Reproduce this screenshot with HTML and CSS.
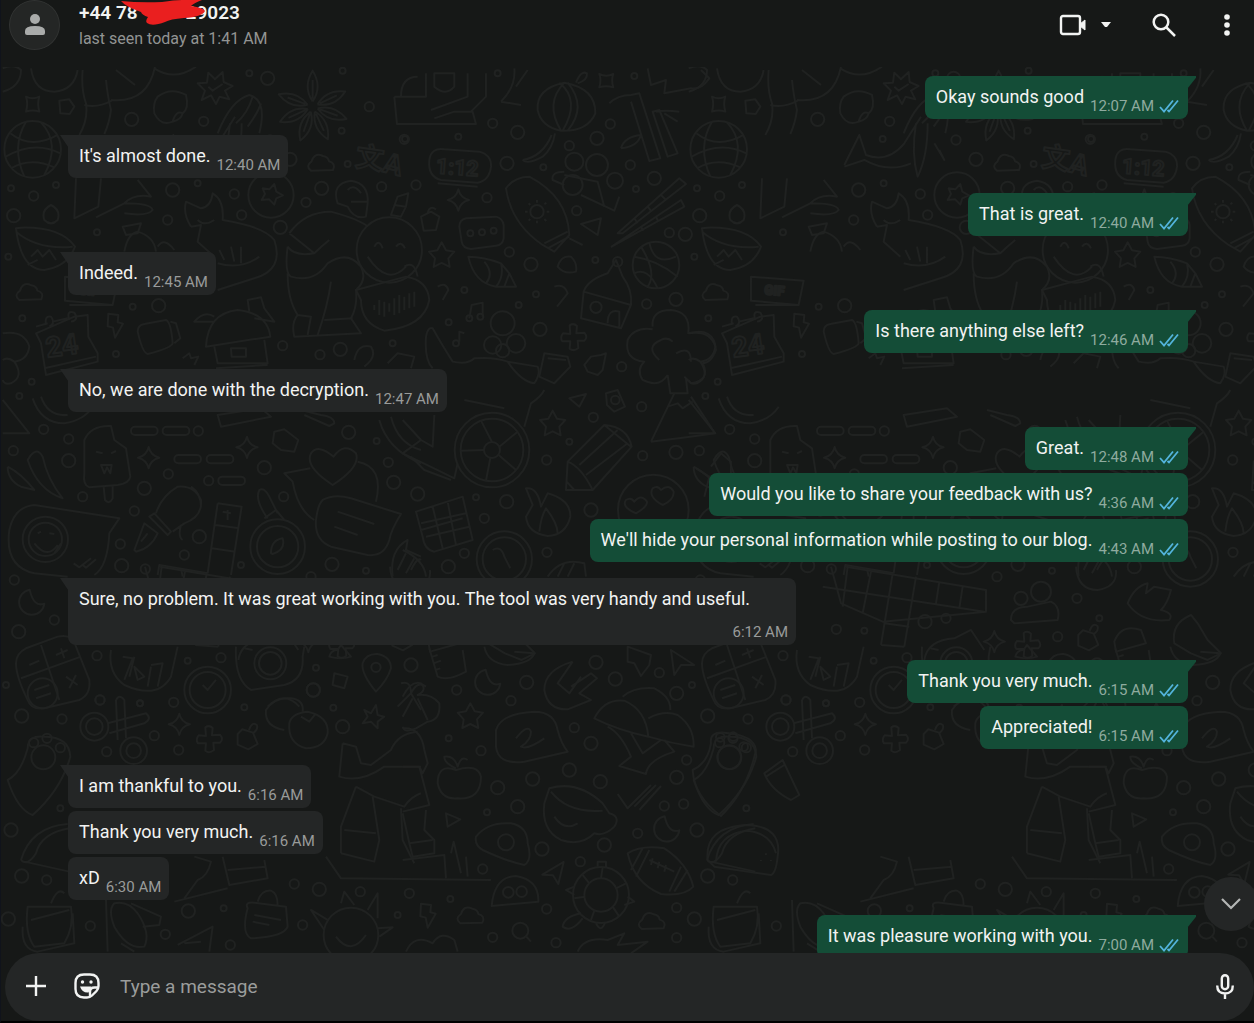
FILE: index.html
```html
<!DOCTYPE html>
<html lang="en">
<head>
  <meta charset="UTF-8">
  <meta name="viewport" content="width=device-width, initial-scale=1">
  <title>Chat</title>
  <link rel="stylesheet" href="styles.css">
</head>
<body>

  <!-- Shared shapes -->
  <svg class="sprite" aria-hidden="true">
    <defs>
      <symbol id="ticks" viewBox="0 0 20 14">
        <path d="M1 8 L5 12.5 L14 1.5 M8.5 11 L10 12.5 L19 1.5" fill="none" stroke="currentColor" stroke-width="1.8"/>
      </symbol>
      <circle id="r1" r="9"/>
      <circle id="r2" r="14"/>
      <circle id="r3" r="20"/>
      <path id="spark" d="M0 -32 Q6 -6 32 0 Q6 6 0 32 Q-6 6 -32 0 Q-6 -6 0 -32Z"/>
      <path id="star" d="M0 -38 L13 -14 L38 -10 L20 10 L24 36 L0 24 L-24 36 L-20 10 L-38 -10 L-13 -14Z"/>
      <path id="cloud" d="M-30 22 Q-48 8 -28 -6 Q-20 -34 6 -22 Q22 -20 24 -6 Q46 0 36 20Z"/>
      <path id="bolt" d="M-18 -34 L12 -30 L10 -8 L26 -4 L2 38 L-4 8 L-20 4Z"/>
      <path id="moon" d="M-6 -36 A38 38 0 1 0 38 6 Q6 18 -6 -36Z"/>
      <path id="plane" d="M30 -32 L-34 6 L-2 8 L14 34Z"/>
      <path id="petal" d="M0 -16 Q-30 -60 0 -108 Q30 -60 0 -16 M0 -24 V-80"/>
      <path id="cross" d="M-12 -36 Q0 -44 10 -34 L8 -12 L32 -14 Q44 0 32 10 L12 10 L14 32 Q0 44 -12 34 L-10 12 L-34 12 Q-42 0 -32 -12 L-10 -10Z"/>
      <path id="jar" d="M-28 -10 L-14 -24 L18 -14 L32 20 L4 36 L-28 22Z M6 -22 Q16 -50 30 -36 Q34 -24 18 -12"/>
    </defs>
  </svg>

  <header class="header">
    <div class="avatar">
      <svg width="20" height="22" viewBox="0 0 20 22" fill="#a9abaa" aria-hidden="true">
        <circle cx="10" cy="5" r="5"/>
        <path d="M0 19 V17 Q0 12 10 12 Q20 12 20 17 V19 Q20 21 18 21 H2 Q0 21 0 19Z"/>
      </svg>
    </div>
    <div class="contact">
      <h1 class="contact-name"><span>+44 78</span><span class="hidden-digits"><svg class="scribble" width="90" height="26" viewBox="0 0 90 26" aria-hidden="true"><path fill="#ea1f1f" d="M3 1 Q22 3 44 2 Q56 0 64 0 H84 Q76 3 73 6 Q86 8 87 11 Q84 17 66 18 Q52 19 47 22 Q34 27 29 23 Q27 21 30 17 Q24 15 23 12 Q8 7 3 1Z"/></svg></span><span>29023</span></h1>
      <p class="contact-status">last seen today at 1:41 AM</p>
    </div>
    <div class="header-actions">
      <button class="icon-btn video-btn" type="button" aria-label="Video call">
        <svg width="28" height="22" viewBox="0 0 28 22" fill="none" stroke="currentColor" stroke-width="2.4" aria-hidden="true">
          <rect x="2" y="2" width="19" height="18" rx="2"/>
          <path d="M21 10 L26 6 V16 L21 12Z" fill="currentColor" stroke-width="1"/>
        </svg>
        <svg width="10" height="6" viewBox="0 0 10 6" fill="currentColor" aria-hidden="true"><path d="M0 0 H10 L6 5 H4Z"/></svg>
      </button>
      <button class="icon-btn" type="button" aria-label="Search">
        <svg width="24" height="24" viewBox="0 0 24 24" fill="none" stroke="currentColor" stroke-width="2.5" aria-hidden="true">
          <circle cx="9" cy="9" r="7.3"/>
          <path d="M14 14 L23 23"/>
        </svg>
      </button>
      <button class="icon-btn" type="button" aria-label="Menu">
        <svg width="6" height="22" viewBox="0 0 6 22" fill="currentColor" aria-hidden="true">
          <circle cx="3" cy="3" r="2.8"/><circle cx="3" cy="11" r="2.8"/><circle cx="3" cy="19" r="2.8"/>
        </svg>
      </button>
    </div>
  </header>

  <main class="chat">
    <!-- Doodle wallpaper, repeats every 686px -->
    <svg class="wallpaper" aria-hidden="true">
      <g id="tile">
        <g transform="translate(0 -7) scale(.3333)">
          <circle cx="95" cy="268" r="85"/>
          <path d="M28 220 Q90 270 170 225 M75 185 Q30 260 70 350 M120 187 Q180 250 130 345 M14 290 Q100 240 178 280 M30 325 Q90 290 160 322"/>
          <path d="M245 30 Q240 90 255 130 Q262 180 235 225 M315 60 Q320 110 330 150 Q325 190 310 222 M250 135 Q290 145 332 122 M330 120 Q440 130 462 20 M345 30 L402 75 M460 25 Q520 65 585 20"/>
          <path d="M90 25 Q100 95 160 95 Q220 90 230 30 M5 95 Q60 80 60 30 Q40 10 5 25"/>
          <path d="M75 110 Q95 120 115 110 Q108 130 115 155 Q95 148 75 155 Q82 130 75 110Z M175 122 L205 118 L220 140 L206 162 L178 160Z"/>
          <path d="M590 70 L618 68 L622 38 L642 58 L665 36 L668 66 L695 78 L672 92 L685 118 L656 110 L645 132 L630 106 L602 120 L612 92Z M622 80 L635 92 L665 72"/>
          <path d="M470 110 Q510 80 555 105 Q565 145 545 160 Q525 150 515 185 Q480 200 460 160 Q455 130 470 110Z M515 185 Q540 180 545 160"/>
          <path d="M650 220 Q690 120 745 105 Q800 120 775 220 M705 190 Q740 160 755 110 M740 200 Q770 160 780 130"/>
          <g transform="translate(935 140)">
            <use href="#petal"/><use href="#petal" transform="rotate(65)"/><use href="#petal" transform="rotate(110)"/><use href="#petal" transform="rotate(155)"/>
            <use href="#petal" transform="rotate(200)"/><use href="#petal" transform="rotate(245)"/><use href="#petal" transform="rotate(290)"/>
          </g>
          <path d="M1180 110 L1188 192 H1425 L1415 155 L1360 155 L1300 175 M1180 110 H1275 V40 M1200 110 Q1200 50 1250 50 M1300 40 H1360 V80 Q1335 110 1300 80Z M1400 40 V110 L1290 150 M1455 40 V110 L1410 155"/>
          <text class="doodle-text" x="1065" y="325" transform="rotate(8 1110 290)">文</text>
          <text class="doodle-text" x="1155" y="345" transform="rotate(14 1190 290)">A</text>
          <use href="#cloud" x="960" y="310"/><use href="#cloud" x="85" y="698"/>
          <circle cx="810" cy="405" r="68"/><path d="M785 385 L805 388 L820 372 L826 395 L846 406 L826 415 L820 434 L804 418 L782 420 L792 402Z"/>
          <path d="M1010 430 Q990 370 1050 362 Q1105 370 1100 430 L1095 470 Q1060 480 1040 440Z M1040 390 Q1060 370 1080 400 M1050 425 H1100"/>
          <path d="M1170 465 L1190 410 L1222 400 L1215 440 L1200 470Z M1180 435 L1215 440"/>
          <path d="M130 480 Q120 450 150 435 Q180 450 170 480 Q150 500 130 480Z M45 505 Q60 630 130 630 Q200 620 222 560 Q180 500 60 503Z M45 515 Q110 570 215 560 M90 590 L110 570 L125 590 L145 570 L165 600 M80 615 L110 600"/>
          <path d="M225 355 L220 475 L292 440 L300 355 M285 472 L370 430 Q450 430 455 450 Q440 470 370 460 M370 430 Q400 400 450 410 L410 360"/>
          <path d="M370 575 Q380 520 410 515 Q460 530 465 575 M365 500 L420 490 L410 520 L375 525Z M470 560 Q490 530 520 570"/>
          <path d="M570 500 Q545 460 555 425 L600 445 Q630 440 635 400 Q670 420 665 480 Q790 500 820 540 Q850 630 760 655 L650 690 M570 500 L600 495 L590 545 L640 590 M590 480 Q610 500 640 480 M655 570 L670 600 M690 560 L700 605 M720 560 L720 610 M650 610 Q720 630 775 590"/>
          <path d="M865 520 Q910 455 990 455 Q1080 480 1100 500 M865 520 L940 580 Q960 560 985 540 M940 580 Q880 590 860 560 M860 560 Q850 640 870 650 Q940 670 980 610 Q1040 570 1080 620 Q1100 660 1065 690 Q1070 740 1050 775 L1080 820 L880 830 Q870 790 890 765 Q860 720 860 640 M990 665 Q980 740 950 825 M890 765 L930 770 L920 825 M970 780 L1055 775"/>
          <circle cx="1165" cy="570" r="98"/><path d="M1120 560 Q1135 535 1145 565 M1185 560 Q1200 540 1212 565 M1100 590 Q1160 680 1215 620 M1210 620 Q1240 600 1250 650"/>
          <path d="M1065 690 L1215 650 Q1280 660 1285 720 Q1270 800 1150 812 Q1080 790 1080 720Z M1120 735 V750 M1135 720 V765 M1150 725 V770 M1165 730 V755 M1180 715 V765 M1195 705 V760 M1210 710 V750 M1225 700 V745 M1240 695 V740"/>
          <path d="M192 650 L350 662 L335 735 L192 722Z M205 735 L335 735"/>
          <text class="doodle-text doodle-tiny" x="232" y="706" transform="rotate(5 270 690)">GIF</text>
          <path d="M105 800 L140 790 M155 785 L200 775 M220 770 L260 765 L262 830 L290 880 V905 L135 945 L120 850 L105 820Z M135 795 Q130 765 150 770 Q165 790 145 800 M205 780 Q195 750 220 758 Q235 780 210 785 M130 925 L285 890"/>
          <text class="doodle-text" x="135" y="885" transform="rotate(-8 190 860)">24</text>
          <path d="M410 815 Q410 795 430 792 L495 780 Q510 785 515 850 Q510 865 440 882 Q425 880 410 815Z M508 785 L525 790 L538 835 L520 850"/>
          <path d="M615 860 Q620 760 710 750 Q800 760 808 830 Z M640 770 Q610 750 580 785 L640 785 M745 755 L740 720 L780 712 L790 745 L820 785 L760 775 M640 860 L650 910 H800 L790 840 M690 865 H735 V890 H692Z M645 925 L800 915"/>
          <use href="#bolt" x="340" y="795"/>
          <path d="M5 820 Q70 810 85 860 Q80 900 40 905 Q70 950 30 970 Q10 975 5 960 M5 900 Q20 890 40 905 M1060 900 Q1070 850 1110 860 Q1130 890 1090 920 M1160 910 L1190 880 L1240 890 L1230 925"/>
          <path d="M545 895 L565 880 L570 895 L592 890 L580 915"/>
          <use href="#r1" x="745" y="40"/><use href="#r3" x="800" y="55"/><use href="#r1" x="1025" y="32"/><use href="#r3" x="392" y="178"/><use href="#r2" x="608" y="184"/><use href="#r2" x="1105" y="140"/>
          <use href="#r1" x="1022" y="212"/><use href="#r2" x="1210" y="238"/><use href="#r1" x="1040" y="312"/><use href="#r1" x="30" y="385"/><use href="#r2" x="98" y="408"/><use href="#r1" x="165" y="375"/>
          <use href="#r3" x="515" y="390"/><use href="#r1" x="590" y="370"/><use href="#r2" x="700" y="402"/><use href="#r2" x="722" y="465"/><use href="#r2" x="915" y="427"/><use href="#r3" x="962" y="385"/>
          <use href="#r2" x="1142" y="380"/><use href="#r3" x="38" y="467"/><use href="#r2" x="500" y="480"/><use href="#r1" x="288" y="517"/><use href="#r3" x="838" y="502"/><use href="#r1" x="22" y="590"/>
          <use href="#r1" x="395" y="740"/><use href="#r3" x="473" y="737"/><use href="#r1" x="64" y="775"/><use href="#r1" x="345" y="882"/><use href="#r2" x="845" y="857"/><use href="#r3" x="1018" y="868"/>
          <use href="#r2" x="957" y="884"/><use href="#r1" x="1175" y="850"/><use href="#r1" x="92" y="965"/>
        </g>

        <g transform="translate(400 -7) scale(.3333)">
          <path d="M300 125 Q345 80 340 25 M300 125 L360 135 M345 80 L380 30"/>
          <path d="M410 150 Q405 85 490 68 Q585 85 583 160 Q560 215 480 212 Q420 200 410 150Z M490 68 Q430 130 480 212 M500 68 Q560 140 500 212 M475 68 Q540 120 485 212 M525 68 Q540 30 558 40 Q560 60 530 70"/>
          <path d="M595 42 Q615 52 637 42 Q630 60 637 82 Q615 75 595 82 Q602 60 595 42Z"/>
          <path d="M740 25 L750 75 L795 60 L790 100 L870 85 Q900 90 925 55 L900 30"/>
          <path d="M625 130 Q650 105 690 105 L715 100 L778 295 L745 303 L690 125 M755 155 L775 150 L830 280 L800 290 Z M765 155 Q790 150 835 155 M790 160 L830 185 M660 265 Q670 230 720 225 Q710 260 660 265"/>
          <path d="M85 300 Q90 262 130 268 L235 275 Q272 285 270 320 Q265 362 230 368 L120 360 Q80 350 85 300Z M110 370 L230 380"/>
          <text class="doodle-text doodle-small" x="105" y="345" transform="rotate(4 175 320)">1:12</text>
          <path d="M365 300 Q425 290 452 225 M365 300 Q380 315 425 290 Q455 265 462 220"/>
          <circle cx="520" cy="305" r="27"/><circle cx="588" cy="315" r="33"/><circle cx="642" cy="362" r="24"/><circle cx="515" cy="375" r="30"/>
          <path d="M490 335 Q450 335 455 360 L490 375 M540 405 L640 452 L655 410 M490 345 L590 365 L610 440"/>
          <path d="M315 385 Q340 350 385 350 Q500 410 505 525 L460 575 L425 555 Q330 490 315 385Z M430 550 L500 515 M440 565 L505 530 M505 535 L545 555"/>
          <circle cx="408" cy="455" r="20"/><path d="M408 420 V428 M408 482 V490 M372 455 H380 M437 455 H445 M383 430 L388 435 M430 477 L436 483 M383 482 L388 477 M430 433 L436 428"/>
          <path d="M175 500 Q175 480 195 475 L285 470 Q305 475 308 495 V535 Q305 555 285 557 L210 567 Q185 565 182 545Z"/>
          <use href="#r1" x="208" y="520"/><use href="#r1" x="243" y="517"/><use href="#r1" x="278" y="512"/>
          <path d="M650 520 L835 355 L855 372 L665 520Z M632 560 L840 420 L850 440Z M700 475 L710 490 M740 440 L752 455 M780 405 L795 420 M720 500 L727 512 M765 470 L772 485"/>
          <path d="M540 492 L600 475 L590 525Z M60 470 L90 455 L115 470 L105 510 L68 512Z M80 460 Q85 435 105 448"/>
          <circle cx="765" cy="615" r="70"/><path d="M700 590 Q770 600 830 650 M745 548 Q760 620 825 590 M720 560 Q770 640 740 680 M700 640 Q740 620 770 685"/>
          <use href="#star" x="122" y="585"/><use href="#spark" x="172" y="420"/>
          <path d="M202 590 Q220 670 285 680 L345 680 L325 640 L300 610 Q250 590 202 590Z M250 605 Q280 640 255 670 M300 610 Q310 650 285 680 M325 640 L310 680"/>
          <path d="M470 620 Q480 585 510 590 Q530 610 525 635 Q490 645 470 620Z M110 680 Q135 665 142 690 L125 720 M460 680 Q490 670 500 700 L468 740"/>
          <path d="M548 695 Q560 660 620 640 L645 600 L665 650 Q695 690 690 735 L660 805 L540 775Z M548 695 L690 735 M620 790 Q620 745 655 755 V800"/><circle cx="585" cy="742" r="17"/><circle cx="650" cy="605" r="14"/>
          <path d="M205 775 L212 735 L245 728 V770 M175 845 V815 L190 820"/><use href="#r1" x="205" y="775"/><use href="#r1" x="238" y="770"/><use href="#r1" x="165" y="850"/>
          <path d="M75 830 Q80 800 95 805 Q120 850 155 905 Q200 915 220 895 Q280 890 320 905 Q360 965 400 970 Q420 940 410 920 L320 905 M75 830 Q70 900 95 925"/>
          <circle cx="305" cy="790" r="36"/><circle cx="345" cy="850" r="28"/><circle cx="275" cy="855" r="26"/><circle cx="305" cy="872" r="20"/>
          <use href="#cross" x="518" y="832"/>
          <path d="M430 880 L500 890 L508 920 L460 970 L415 950Z M440 895 L495 900"/>
          <path d="M755 800 Q750 750 810 750 Q870 755 862 820 Q940 800 945 870 Q930 910 905 910 Q930 960 870 970 L850 950 M800 945 Q775 985 725 960 Q705 930 730 905 Q670 900 680 840 Q700 800 755 808 M775 900 Q730 860 780 840 Q800 830 815 845 M825 880 Q870 855 870 905 M800 945 L808 1000 H860 L855 955"/>
          <path d="M550 915 L570 890 L600 885 L615 880 L605 930 L590 945 L560 935Z"/>
          <use href="#r1" x="290" y="40"/><use href="#r1" x="700" y="48"/><use href="#r2" x="275" y="190"/><use href="#r3" x="350" y="217"/><use href="#r2" x="628" y="192"/><use href="#r3" x="588" y="235"/><use href="#r2" x="505" y="257"/>
          <use href="#r1" x="12" y="237"/><use href="#r1" x="172" y="230"/><use href="#r3" x="318" y="310"/><use href="#r1" x="427" y="322"/><use href="#r2" x="688" y="315"/><use href="#r3" x="760" y="355"/><use href="#r2" x="45" y="375"/>
          <use href="#r2" x="258" y="413"/><use href="#r2" x="527" y="452"/><use href="#r1" x="705" y="387"/><use href="#r2" x="805" y="518"/><use href="#r3" x="853" y="523"/><use href="#r3" x="390" y="613"/><use href="#r2" x="325" y="576"/>
          <use href="#r1" x="583" y="600"/><use href="#r1" x="190" y="690"/><use href="#r1" x="405" y="703"/><use href="#r1" x="353" y="735"/><use href="#r2" x="737" y="732"/><use href="#r3" x="825" y="718"/><use href="#r3" x="417" y="808"/>
          <use href="#r1" x="143" y="787"/><use href="#r2" x="662" y="920"/>
        </g>

        <g transform="translate(0 323) scale(.3333)">
          <path d="M5 30 L85 130 H5 M95 25 Q120 100 190 100 Q250 90 275 50 M120 20 Q140 80 200 75"/>
          <path d="M250 150 Q270 105 330 108 L340 150 L375 175 L388 260 Q385 280 350 285 L265 292 Q245 285 250 250Z M308 290 L312 330 Q325 345 335 325 V288 M285 185 L305 190 M330 190 L345 183 M300 225 L310 250 L318 232 L328 250 L332 225Z"/>
          <rect x="390" y="110" width="80" height="25" rx="12"/><rect x="485" y="110" width="80" height="25" rx="12"/><rect x="520" y="195" width="80" height="25" rx="12"/><rect x="617" y="195" width="80" height="25" rx="12"/><rect x="652" y="260" width="80" height="25" rx="12"/>
          <path d="M650 75 L780 55 L810 80 L660 110Z M900 60 L960 75 Q1000 80 1000 100 L985 108 L910 75"/>
          <use href="#spark" x="443" y="203"/><use href="#spark" x="738" y="172"/>
          <path d="M820 125 L850 118 L892 150 L880 185 L840 180 L815 160Z"/>
          <path d="M20 230 Q60 250 100 300 L60 290 Q20 270 20 230 M80 210 Q105 165 125 200 Q140 270 185 325 Q110 300 80 210Z"/>
          <path d="M995 285 Q910 230 930 190 Q950 160 998 200 Q1030 155 1065 190 Q1080 230 995 285Z M928 235 L850 250 L875 275 Q890 360 940 390 M1070 215 Q1150 230 1125 335 M965 330 Q1000 310 1050 325 L1200 372 Q1170 420 1165 450 Q1150 500 1100 495 L990 470 Q940 450 945 390 Q950 345 965 330Z M1010 365 L1120 402 M1000 410 L1070 435"/>
          <path d="M1135 90 Q1160 180 1260 220 M1170 80 Q1190 160 1260 180"/>
          <path d="M100 345 Q40 350 25 420 Q10 530 100 550 L200 560 M100 345 L355 385 L325 430 Q320 530 280 555"/>
          <circle cx="133" cy="448" r="68"/><circle cx="133" cy="448" r="50"/><path d="M110 430 L120 425 M145 430 L160 432 M100 460 Q140 510 170 465 M160 490 L180 460 M218 520 L235 532 L270 505 M245 525 L255 533 L285 508"/>
          <path d="M400 480 L430 400 L470 430 Q450 475 405 485Z M445 380 L500 435 L510 425 L460 370Z M465 370 Q480 320 530 290 Q580 285 600 330 Q605 380 550 400 L515 425 M570 290 Q600 310 600 350 M540 405 Q530 440 545 450 M420 455 L440 430"/>
          <path d="M650 340 L722 350 L690 555 M650 340 L620 550 M643 405 L715 415 M633 475 L703 485 M665 365 L690 370 M680 360 V390 M470 555 L475 525 L620 550 M540 535 L545 560"/>
          <circle cx="830" cy="470" r="82"/><circle cx="830" cy="470" r="62"/><path d="M810 490 Q810 450 845 445 Q855 480 815 492Z M800 385 Q760 330 775 300 Q790 290 805 320 L830 370 M790 385 L825 360 L850 390"/>
          <path d="M1175 560 Q1165 480 1220 450 L1215 480 L1260 500 M1190 540 L1215 490 M1215 550 L1240 505"/>
          <use href="#moon" x="92" y="635"/>
          <path d="M45 820 Q45 790 75 775 L170 740 Q215 730 225 770 L265 870 Q270 915 235 930 L130 955 Q90 960 80 930 Q45 860 45 820Z M120 765 L175 930 M60 865 L240 800 M85 825 L115 812 M165 795 L200 780 M180 775 L190 805 M195 860 L230 885 M225 855 L205 895"/><circle cx="125" cy="910" r="45"/><path d="M100 900 L145 885 M105 925 L150 910"/>
          <path d="M330 780 Q320 850 370 885 Q470 930 510 860 L530 770 M365 800 L395 805 L370 870 M385 860 L400 800 M400 830 L430 860 L410 870Z M450 825 L485 820 L470 890 M440 890 L450 830"/>
          <circle cx="620" cy="900" r="70"/><circle cx="620" cy="900" r="54"/><path d="M605 885 L620 900 L645 870"/>
          <path d="M705 770 Q700 870 750 900 L850 885 Q910 870 905 800 L910 770 M730 775 L755 780"/><circle cx="808" cy="820" r="48"/><circle cx="808" cy="820" r="34"/>
          <path d="M985 800 Q990 780 1010 780 L1020 765 L1050 800 Q1020 810 985 800Z M1000 850 L1040 860 L1030 895 L995 885Z M1125 905 Q1080 850 1085 820 Q1095 790 1130 792 Q1170 800 1170 835 Q1160 870 1125 905Z"/><circle cx="1125" cy="832" r="14"/>
          <path d="M1200 880 Q1230 870 1230 910 Q1250 870 1275 890 M1230 910 L1190 950 M1230 910 L1260 960 M800 950 Q850 900 895 950"/>
          <use href="#r1" x="55" y="18"/><use href="#r2" x="128" y="118"/><use href="#r2" x="203" y="147"/><use href="#r2" x="592" y="123"/><use href="#r3" x="203" y="212"/><use href="#r3" x="430" y="295"/><use href="#r2" x="502" y="252"/><use href="#r3" x="790" y="233"/>
          <use href="#r2" x="623" y="272"/><use href="#r2" x="37" y="182"/><use href="#r3" x="1043" y="127"/><use href="#r1" x="1127" y="153"/><use href="#r2" x="1162" y="217"/><use href="#r3" x="1178" y="277"/><use href="#r2" x="245" y="320"/><use href="#r2" x="400" y="363"/>
          <use href="#r2" x="848" y="320"/><use href="#r3" x="595" y="440"/><use href="#r2" x="358" y="462"/><use href="#r3" x="362" y="527"/><use href="#r2" x="550" y="495"/><use href="#r2" x="433" y="537"/><use href="#r1" x="720" y="525"/><use href="#r3" x="993" y="523"/>
          <use href="#r1" x="1095" y="542"/><use href="#r2" x="40" y="570"/><use href="#r2" x="160" y="690"/><use href="#r3" x="53" y="725"/><use href="#r2" x="288" y="797"/><use href="#r1" x="560" y="812"/><use href="#r2" x="660" y="803"/><use href="#r3" x="937" y="900"/>
          <use href="#r1" x="945" y="833"/><use href="#r2" x="297" y="930"/><use href="#r1" x="417" y="940"/><use href="#r1" x="15" y="885"/>
        </g>

        <g transform="translate(400 323) scale(.3333)">
          <circle cx="273" cy="180" r="112"/><circle cx="273" cy="180" r="94"/><circle cx="273" cy="180" r="24"/>
          <path d="M273 156 L240 92 M295 170 L350 125 M293 195 L345 240 M268 204 L255 272 M250 180 L180 182 M190 30 L310 55 M370 110 L390 40 Q420 20 430 0"/>
          <path d="M5 90 L60 150 L95 170 L100 75 M60 150 L5 190 Q90 230 160 265 L170 220 M30 200 L70 240 L150 270"/>
          <path d="M500 215 L610 105 Q680 110 692 170 L575 300 L495 300Z M500 215 Q540 230 575 300 M535 225 L650 120 M555 255 L680 160 M610 105 L690 170 M497 275 L520 300"/>
          <use href="#star" x="455" y="100"/>
          <path d="M505 25 L555 12 L535 50Z M615 10 L650 0 L672 50 L640 65 L618 45Z"/><circle cx="643" cy="30" r="13"/>
          <path d="M750 155 L820 10 M870 20 L942 130 Q840 145 750 155 M800 50 L830 40 L845 55 L875 35"/>
          <path d="M45 365 L185 320 L215 450 L100 485 Q70 480 65 440Z M60 400 L195 370 M75 440 L205 410 M95 350 L125 475 M140 335 L165 465 M60 420 L185 385"/>
          <path d="M375 295 Q410 290 420 350 L440 310 Q510 330 508 380 Q495 435 440 438 Q380 430 375 380 L395 345Z M415 425 Q420 380 435 355 Q470 400 470 430"/>
          <circle cx="310" cy="507" r="83"/><circle cx="310" cy="507" r="65"/><path d="M275 480 Q300 465 310 500 L328 535"/>
          <circle cx="757" cy="360" r="106"/><path d="M705 370 Q660 350 675 330 Q690 320 700 335 Q720 310 738 335 Q740 350 705 370Z M785 345 Q740 320 755 295 Q770 285 780 300 Q805 280 818 305 Q820 330 785 345Z"/>
          <path d="M885 235 L925 260 L910 320 M930 230 L960 190 L990 215 V250"/>
          <path d="M5 480 Q70 510 75 560 M30 540 Q50 500 60 510 M440 560 Q480 500 550 520 L555 560 M470 560 L490 520 M500 560 L520 520"/>
          <use href="#r3" x="50" y="312"/><use href="#r3" x="317" y="335"/><use href="#r1" x="225" y="322"/><use href="#r2" x="250" y="385"/><use href="#r2" x="437" y="210"/><use href="#r1" x="505" y="155"/><use href="#r2" x="577" y="82"/><use href="#r2" x="722" y="50"/>
          <use href="#r2" x="725" y="197"/><use href="#r3" x="825" y="187"/><use href="#r3" x="570" y="360"/><use href="#r2" x="190" y="490"/><use href="#r3" x="142" y="530"/><use href="#r2" x="438" y="487"/>
        </g>

        <!-- crossword, people and whale -->
        <g transform="translate(134 323) scale(.3333)">
          <path d="M30 530 L60 640 L185 695 L495 665 V600 L75 530 M5 590 L490 665 M65 650 L80 530 M125 670 L150 545 M180 765 L215 550 M250 770 L285 560 M180 765 L250 770 M190 700 L265 710 M345 640 L355 575 M415 655 L425 590"/>
          <circle cx="660" cy="605" r="30"/><circle cx="600" cy="625" r="20"/>
          <path d="M570 690 Q570 650 620 650 L690 635 Q720 650 710 690 L580 700Z M920 640 Q940 590 980 580 L975 610 L1000 590 L1050 600 Q1040 640 1020 660 Q1060 670 1045 690 Q960 700 920 640Z"/>
          <path d="M1060 760 Q1050 700 1110 675 L1130 700 L1160 750 L1200 790 L1160 810 L1110 790Z M880 755 Q900 700 960 720 L975 760 L885 785Z"/>
          <use href="#cross" x="620" y="765"/><use href="#jar" x="800" y="745"/><use href="#spark" x="520" y="755"/>
          <path d="M310 810 Q320 750 400 745 L450 720 L490 780 M765 530 Q770 600 830 600 Q890 590 885 540"/>
          <use href="#r3" x="312" y="695"/><use href="#r2" x="375" y="685"/><use href="#r2" x="46" y="718"/><use href="#r1" x="130" y="722"/><use href="#r2" x="768" y="625"/><use href="#r1" x="835" y="685"/><use href="#r2" x="710" y="740"/><use href="#r2" x="528" y="560"/>
        </g>
        <g transform="translate(134 -7) scale(.3333)">
          <path d="M70 315 L115 225 L135 285 Q200 310 250 250 L300 170 M70 320 L130 300 Q200 340 270 310 M285 190 Q270 280 290 350 Q320 290 320 190 M340 250 L370 300 L355 270"/>
          <use href="#r1" x="185" y="237"/><use href="#r2" x="405" y="240"/><use href="#r3" x="465" y="298"/>
        </g>

        <g transform="translate(0 613) scale(.3333)">
          <circle cx="280" cy="140" r="42"/><circle cx="280" cy="140" r="25"/><circle cx="398" cy="212" r="40"/><circle cx="398" cy="212" r="22"/>
          <path d="M345 60 Q355 40 370 60 L375 175 M350 180 L345 60 M320 130 L435 100 Q455 115 430 130 L325 160"/>
          <use href="#spark" x="535" y="133"/><use href="#cross" x="625" y="178"/><use href="#jar" x="738" y="172"/>
          <path d="M80 205 Q80 165 130 170 Q205 170 208 230 Q180 330 95 405 Q50 390 20 300 Q60 280 80 205Z"/><circle cx="127" cy="232" r="36"/><circle cx="98" cy="188" r="14"/><circle cx="138" cy="175" r="14"/><circle cx="178" cy="203" r="14"/>
          <path d="M60 540 Q90 440 200 432 M70 545 L205 575 M60 540 Q80 560 105 520 Q120 460 205 445"/>
          <path d="M850 150 Q790 140 795 90 Q820 50 870 55 Q910 60 905 95 M865 130 Q870 100 920 95 Q985 110 980 160 Q970 205 915 205 Q860 190 865 130Z M900 110 L925 125 L945 100"/>
          <path d="M1090 90 L1110 100 L1125 75 L1130 105 L1150 110 L1130 125 L1130 145 L1110 125 L1085 130 L1100 110Z"/>
          <path d="M1025 190 L1065 200 L1080 250 L1110 255 L1170 210 Q1190 160 1250 155 M1025 190 L1015 290 Q1080 310 1150 260 H1260 M1065 320 L1120 350 L1210 380 Q1230 350 1260 340 M1065 320 L1020 440 V520 M1115 350 L1135 480 L1120 545 L1020 520 M1030 450 L1125 460 M1200 385 L1205 480 L1240 550 M975 530 L1020 595 L1470 600"/>
          <path d="M580 530 L630 545 Q620 590 590 600 L550 655 M665 530 L685 615 L800 595 L790 540 M680 570 L795 560 M520 665 L680 625"/>
          <path d="M80 680 Q70 760 100 800 L190 790 Q220 740 210 680Z M90 720 L205 690 M150 670 Q170 620 190 640 M65 740 Q60 810 110 815 L220 790 L215 700"/>
          <path d="M315 660 L320 815 M340 670 Q380 660 410 700 Q450 760 430 800 Q380 810 340 740 Q320 690 340 670Z M390 670 L480 710 L475 735 L425 740 M360 790 L400 815"/>
          <path d="M530 795 L635 740 L625 815 M550 790 L600 785"/>
          <path d="M740 685 Q730 665 760 668 L855 680 L860 740 Q850 770 750 775 Q720 760 740 685Z M770 665 Q780 630 810 632 Q830 640 830 675 M760 705 L840 720 M755 725 L805 735"/>
          <circle cx="1050" cy="765" r="82"/><path d="M1020 670 L1030 635 L1060 675 M1100 690 L1130 640 L1130 715 M980 720 L930 690 L970 750 M1130 745 L1175 742 L1135 770 M1005 770 Q1050 830 1095 765"/>
          <use href="#r3" x="62" y="108"/><use href="#r2" x="183" y="117"/><use href="#r2" x="297" y="60"/><use href="#r1" x="417" y="70"/><use href="#r2" x="518" y="67"/><use href="#r1" x="730" y="82"/><use href="#r3" x="937" y="30"/><use href="#r1" x="997" y="83"/><use href="#r3" x="1025" y="140"/>
          <use href="#r2" x="317" y="215"/><use href="#r2" x="460" y="167"/><use href="#r2" x="533" y="210"/><use href="#r3" x="30" y="450"/><use href="#r1" x="178" y="385"/><use href="#r3" x="62" y="588"/><use href="#r2" x="137" y="600"/><use href="#r3" x="562" y="693"/><use href="#r1" x="668" y="685"/>
          <use href="#r2" x="268" y="738"/><use href="#r2" x="493" y="763"/><use href="#r2" x="688" y="795"/><use href="#r2" x="880" y="612"/><use href="#r3" x="955" y="628"/><use href="#r2" x="905" y="735"/><use href="#r2" x="1078" y="635"/><use href="#r1" x="1190" y="705"/><use href="#r3" x="22" y="717"/>
        </g>

        <g transform="translate(400 573) scale(.3333)">
          <path d="M85 25 L110 110 Q140 125 195 95 L185 30 M95 50 L110 45 M98 70 L120 62 M103 90 L118 85 M250 20 Q260 70 320 75 Q390 70 400 40 L340 35"/>
          <use href="#moon" x="260" y="125"/><use href="#moon" x="797" y="565"/>
          <path d="M5 170 Q30 120 60 130 Q80 150 50 165 Q90 160 115 190 Q120 240 80 245 L45 265 Q10 280 5 260 M35 175 L5 230 M50 175 L80 240"/>
          <use href="#star" x="208" y="228"/>
          <path d="M515 65 Q430 90 430 150 Q440 210 500 208 L570 180 L535 160 L588 115 L570 100 L510 140 M515 65 L470 130 L505 160 L540 110"/>
          <path d="M680 20 L750 45 L745 75 L720 108 L700 70 L680 65Z M810 30 L880 75 L840 75 L820 105Z"/>
          <path d="M285 270 Q300 220 400 215 Q460 215 470 270 Q480 310 500 335 L370 365 Q290 375 285 320Z M345 295 Q380 250 390 275 Q390 300 360 320 Q380 330 430 295"/>
          <path d="M665 170 Q700 140 760 145 Q810 170 808 210 M580 235 Q610 175 670 182 Q735 210 742 290 Q650 270 580 235Z M742 235 Q790 210 830 225 Q880 260 878 320 Q810 310 742 290 M620 260 Q660 280 690 350 L655 378 L735 402 Q740 360 820 335 L790 300 M690 280 L725 340 L780 300"/>
          <path d="M930 310 Q925 275 970 278 Q1060 285 1065 330 Q1040 450 960 528 Q880 470 875 390 Q920 370 930 310Z"/><circle cx="985" cy="352" r="35"/><circle cx="958" cy="292" r="13"/><circle cx="997" cy="290" r="13"/><circle cx="1028" cy="320" r="13"/>
          <path d="M165 390 Q110 370 110 430 Q120 480 170 475 Q240 480 240 410 Q230 370 165 390Z M165 385 Q130 370 130 350 Q160 345 170 380 Q180 345 200 360"/>
          <path d="M5 265 Q60 260 70 330 L80 370 L65 400 L55 380 H5 M55 380 L85 495 L5 515 M75 510 L70 570 L100 600 V640 L35 650 L25 610 L95 600 M5 520 L25 610 M5 660 L130 645 L135 715 M150 640 L158 605 L180 700 M195 650 L200 710"/>
          <path d="M445 445 Q530 420 605 490 L625 520 Q660 530 640 560 Q610 590 580 580 Q540 620 480 600 Q420 570 430 490Z M450 455 Q500 520 605 512 M460 530 Q490 575 530 550"/>
          <path d="M650 462 L680 505 L750 435 M700 500 L765 435 M715 510 L780 438"/>
          <path d="M1090 400 L1145 360 L1195 465 L1170 480 Q1110 450 1090 400Z M1095 410 L1150 375"/>
          <path d="M225 590 Q260 545 330 550 Q380 560 380 610 Q395 660 370 675 Q320 665 245 630 Q220 615 225 590Z"/><circle cx="315" cy="607" r="24"/>
          <path d="M135 520 L178 538 L140 560Z"/><use href="#plane" x="458" y="698"/>
          <path d="M272 798 Q280 710 345 708 Q415 720 412 785 Z"/><circle cx="322" cy="757" r="16"/><circle cx="362" cy="755" r="16"/>
          <path d="M680 640 Q720 615 790 625 Q860 670 877 740 Q850 770 780 762 Q700 730 680 640Z M745 630 L705 710 M725 625 L690 690 M860 690 L820 755 M840 680 L805 755 M745 660 L820 695 M755 655 L750 675 M775 665 L770 685 M795 675 L790 695"/>
          <path d="M920 660 Q910 560 1040 555 Q1145 560 1130 650 Q1125 700 1110 705 L940 680Z M945 665 Q950 580 1040 572 Q1110 580 1125 640 M1095 640 V645 M1080 660 V663 M1110 660 V663"/>
          <circle cx="600" cy="765" r="50"/><circle cx="600" cy="765" r="84"/><path d="M600 715 L605 682 M645 745 L675 730 M635 800 L655 830 M580 812 L570 840 M552 770 L520 775 M565 730 L545 705 M590 680 L590 665 H615 V682 M520 740 L495 750 L520 765 M680 770 L700 785 L670 795 M540 820 Q490 830 485 860 Q510 880 545 835 M585 850 Q600 880 612 848"/>
          <use href="#bolt" x="78" y="825"/><use href="#cloud" x="208" y="828"/><use href="#cloud" x="752" y="845"/>
          <path d="M530 935 Q550 890 620 900 L670 880 L650 915 L740 905 L690 940 M15 935 Q40 880 95 910 Q120 870 160 900 L170 935"/>
          <circle cx="358" cy="872" r="24"/><path d="M376 890 L390 905"/>
          <use href="#r3" x="30" y="75"/><use href="#r3" x="377" y="127"/><use href="#r2" x="167" y="150"/><use href="#r3" x="585" y="67"/><use href="#r3" x="643" y="117"/><use href="#r2" x="775" y="98"/><use href="#r3" x="827" y="160"/><use href="#r2" x="330" y="182"/><use href="#r2" x="520" y="263"/>
          <use href="#r3" x="570" y="310"/><use href="#r2" x="240" y="332"/><use href="#r1" x="143" y="295"/><use href="#r3" x="395" y="417"/><use href="#r3" x="290" y="443"/><use href="#r3" x="505" y="390"/><use href="#r3" x="598" y="425"/><use href="#r3" x="350" y="500"/><use href="#r1" x="258" y="517"/>
          <use href="#r3" x="827" y="412"/><use href="#r2" x="857" y="360"/><use href="#r2" x="790" y="498"/><use href="#r2" x="848" y="492"/><use href="#r2" x="710" y="580"/><use href="#r3" x="610" y="615"/><use href="#r3" x="423" y="627"/><use href="#r2" x="538" y="665"/>
          <use href="#r2" x="245" y="687"/><use href="#r2" x="25" y="760"/><use href="#r1" x="148" y="777"/><use href="#r2" x="437" y="807"/><use href="#r2" x="275" y="892"/><use href="#r2" x="465" y="908"/><use href="#r2" x="827" y="803"/><use href="#r2" x="827" y="893"/>
        </g>
      </g>
      <use href="#tile" x="686"/>
    </svg>

    <div class="messages">
      <div class="msg out first"><span class="text">Okay sounds good</span><span class="meta">12:07 AM<svg class="ticks"><use href="#ticks"/></svg></span></div>
      <div class="msg in first"><span class="text">It's almost done.</span><span class="meta">12:40 AM</span></div>
      <div class="msg out first"><span class="text">That is great.</span><span class="meta">12:40 AM<svg class="ticks"><use href="#ticks"/></svg></span></div>
      <div class="msg in first"><span class="text">Indeed.</span><span class="meta">12:45 AM</span></div>
      <div class="msg out first"><span class="text">Is there anything else left?</span><span class="meta">12:46 AM<svg class="ticks"><use href="#ticks"/></svg></span></div>
      <div class="msg in first"><span class="text">No, we are done with the decryption.</span><span class="meta">12:47 AM</span></div>
      <div class="msg out first"><span class="text">Great.</span><span class="meta">12:48 AM<svg class="ticks"><use href="#ticks"/></svg></span></div>
      <div class="msg out"><span class="text">Would you like to share your feedback with us?</span><span class="meta">4:36 AM<svg class="ticks"><use href="#ticks"/></svg></span></div>
      <div class="msg out"><span class="text">We'll hide your personal information while posting to our blog.</span><span class="meta">4:43 AM<svg class="ticks"><use href="#ticks"/></svg></span></div>
      <div class="msg in first"><span class="text">Sure, no problem. It was great working with you. The tool was very handy and useful.</span><span class="meta">6:12 AM</span></div>
      <div class="msg out first"><span class="text">Thank you very much.</span><span class="meta">6:15 AM<svg class="ticks"><use href="#ticks"/></svg></span></div>
      <div class="msg out"><span class="text">Appreciated!</span><span class="meta">6:15 AM<svg class="ticks"><use href="#ticks"/></svg></span></div>
      <div class="msg in first"><span class="text">I am thankful to you.</span><span class="meta">6:16 AM</span></div>
      <div class="msg in"><span class="text">Thank you very much.</span><span class="meta">6:16 AM</span></div>
      <div class="msg in"><span class="text">xD</span><span class="meta">6:30 AM</span></div>
      <div class="msg out first"><span class="text">It was pleasure working with you.</span><span class="meta">7:00 AM<svg class="ticks"><use href="#ticks"/></svg></span></div>
    </div>

    <button class="scroll-down" type="button" aria-label="Scroll to bottom">
      <svg width="20" height="12" viewBox="0 0 20 12" fill="none" stroke="currentColor" stroke-width="2.2" aria-hidden="true"><path d="M1 1 L10 10 L19 1"/></svg>
    </button>
  </main>

  <footer class="footer">
    <form class="composer">
      <button class="icon-btn" type="button" aria-label="Attach">
        <svg width="20" height="20" viewBox="0 0 20 20" stroke="currentColor" stroke-width="2.4" aria-hidden="true"><path d="M10 0 V20 M0 10 H20"/></svg>
      </button>
      <button class="icon-btn" type="button" aria-label="Stickers">
        <svg width="26" height="26" viewBox="0 0 26 26" fill="none" stroke="currentColor" stroke-width="2.4" aria-hidden="true">
          <path d="M10 1.500 H16 Q24.500 1.500 24.500 10 V13 Q24.500 16 22.500 18 L18 22.500 Q16 24.500 13 24.500 H10 Q1.500 24.500 1.500 16 V10 Q1.500 1.500 10 1.500Z"/>
          <path d="M24 14.500 H20.500 Q16 14.500 16 19 V24"/>
          <path d="M6 13.500 H17.500 L14.500 19.500 Q8 20 6 13.500Z" fill="currentColor" stroke="none"/>
          <circle cx="8.500" cy="9" r="1.700" fill="currentColor" stroke="none"/>
          <circle cx="17" cy="9" r="1.700" fill="currentColor" stroke="none"/>
        </svg>
      </button>
      <input class="composer-input" type="text" placeholder="Type a message" aria-label="Type a message">
      <button class="icon-btn" type="button" aria-label="Voice message">
        <svg width="18" height="25" viewBox="0 0 18 25" fill="none" stroke="currentColor" stroke-width="2.4" aria-hidden="true">
          <rect x="5.800" y="1.200" width="6.400" height="14" rx="3.200"/>
          <path d="M1.200 11.500 Q1.200 19.500 9 19.500 Q16.800 19.500 16.800 11.500 M9 19.500 V25"/>
        </svg>
      </button>
    </form>
  </footer>

</body>
</html>
```
FILE: styles.css
```css
* {
  box-sizing: border-box;
}

body {
  margin: 0;
  height: 100vh;
  display: flex;
  flex-direction: column;
  background: #161817;
  border-left: 1px solid #10131b;
  border-bottom: 2px solid #000;
  color: #f2f3f2;
  font-family: Roboto, "Liberation Sans", sans-serif;
  font-weight: 450;
  overflow: hidden;
}

button {
  padding: 0;
  border: none;
  background: none;
  color: inherit;
  font: inherit;
  cursor: pointer;
}

.sprite {
  position: absolute;
  width: 0;
  height: 0;
}

/* Header */
.header {
  flex: none;
  display: flex;
  align-items: flex-start;
  height: 67px;
  padding: 0 24px 0 8px;
}

.avatar {
  display: flex;
  align-items: center;
  justify-content: center;
  width: 51px;
  height: 50px;
  border: 1px solid #313332;
  border-radius: 50%;
  background: #242625;
}

.contact {
  margin-left: 19px;
}

.contact-name {
  display: flex;
  margin: 0;
  font-size: 19px;
  font-weight: 600;
  line-height: 26px;
}

.hidden-digits {
  position: relative;
  width: 48px;
}

.scribble {
  position: absolute;
  top: 0;
  left: -20px;
}

.contact-status {
  margin: 0;
  color: #929493;
  font-size: 16px;
  line-height: 25px;
}

.header-actions {
  display: flex;
  align-items: center;
  height: 50px;
  margin-left: auto;
  gap: 48px;
}

.icon-btn {
  display: flex;
  align-items: center;
}

.video-btn {
  gap: 14px;
  margin-right: -7px;
}

/* Chat */
.chat {
  position: relative;
  flex: 1;
  min-height: 0;
  overflow: hidden;
}

.wallpaper {
  position: absolute;
  inset: 0;
  width: 100%;
  height: 100%;
  fill: none;
  stroke: #202221;
  stroke-width: 6px;
  stroke-linejoin: round;
}

.doodle-text {
  font-family: Roboto, "Noto Sans CJK SC", sans-serif;
  font-size: 84px;
  font-weight: 700;
}

.doodle-small {
  font-size: 64px;
}

.doodle-tiny {
  font-size: 40px;
}

.messages {
  position: relative;
  display: flex;
  flex-direction: column;
  align-items: flex-start;
  gap: 3px;
  padding: 9px 66px 0 67px;
}

.msg {
  position: relative;
  flex: none;
  display: flex;
  flex-wrap: wrap;
  max-width: 65%;
  padding: 9px 8px 4px 11px;
  border-radius: 8px;
}

.in {
  background: #242626;
}

.out {
  align-self: flex-end;
  padding-right: 9px;
  background: #144d37;
}

.in.first {
  margin-top: 13px;
  border-top-left-radius: 0;
}

.out.first {
  margin-top: 12px;
  border-top-right-radius: 0;
}

.out.first:first-child {
  margin-top: 0;
}

/* Bubble tails */
.first::before {
  content: "";
  position: absolute;
  top: 0;
  width: 9px;
  height: 12px;
}

.in.first::before {
  left: -8px;
  background: #242626;
  clip-path: polygon(0 0, 100% 0, 100% 100%, 90% 100%);
}

.out.first::before {
  right: -8px;
  background: #144d37;
  clip-path: polygon(0 0, 100% 0, 100% 15%, 10% 100%, 0 100%);
}

.text {
  margin-right: 6px;
  font-size: 18px;
  line-height: 24px;
}

.meta {
  display: flex;
  align-items: center;
  margin-top: 12px;
  margin-left: auto;
  color: #999b9a;
  font-size: 15px;
  line-height: 18px;
}

.out .meta {
  color: #8fab9f;
}

.ticks {
  width: 20px;
  height: 14px;
  margin-left: 5px;
  color: #53b4dc;
}

.scroll-down {
  position: absolute;
  right: -4px;
  bottom: 22px;
  display: flex;
  align-items: center;
  justify-content: center;
  width: 54px;
  height: 54px;
  border-radius: 50%;
  background: #242626;
  color: #b4b6b5;
}

/* Composer */
.footer {
  flex: none;
  padding-left: 4px;
}

.composer {
  display: flex;
  align-items: center;
  height: 68px;
  padding: 0 20px 2px 21px;
  border-radius: 34px;
  background: #242626;
}

.composer .icon-btn + .icon-btn {
  margin-left: 28px;
}

.composer-input {
  flex: 1;
  min-width: 0;
  margin: 0 20px;
  padding: 0;
  border: none;
  outline: none;
  background: none;
  color: inherit;
  font: inherit;
  font-size: 19px;
}

.composer-input::placeholder {
  color: #9b9d9c;
  opacity: 1;
}
```
